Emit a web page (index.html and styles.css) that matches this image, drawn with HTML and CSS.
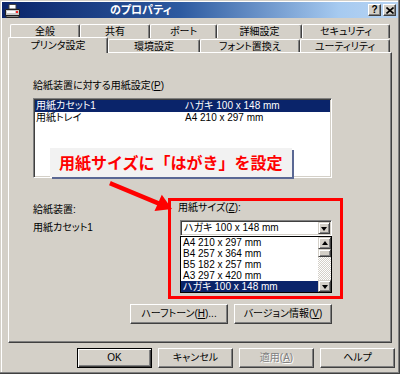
FILE: index.html
```html
<!DOCTYPE html>
<html lang="ja">
<head>
<meta charset="utf-8">
<title>プロパティ</title>
<link rel="stylesheet" href="styles.css">
</head>
<body>
<div class="window">
  <div class="titlebar">
    <svg class="appicon" width="17" height="14" viewBox="0 0 17 14">
      <path d="M5 0.5 L12 0.5 L12 5 L5 5 Z" fill="#fff" stroke="#404040"/>
      <path d="M1.5 5.5 L15.5 5.5 L15.5 11.5 L1.5 11.5 Z" fill="#c8c8c8" stroke="#202020"/>
      <path d="M1.5 11.5 L15.5 11.5 L14.5 13.5 L2.5 13.5 Z" fill="#808080" stroke="#202020"/>
      <rect x="3" y="7" width="8" height="2" fill="#fff"/>
      <rect x="12" y="7" width="2" height="2" fill="#ff2020"/>
    </svg>
    <span class="title">のプロパティ</span>
    <span class="capbtn help">?</span>
    <span class="capbtn close"><svg width="8" height="7" viewBox="0 0 8 7"><path d="M0.5 0.5 L7.5 6.5 M7.5 0.5 L0.5 6.5" stroke="#000" stroke-width="1.6"/></svg></span>
  </div>

  <div class="tabs">
    <div class="tabrow back">
      <div class="tab">全般</div>
      <div class="tab">共有</div>
      <div class="tab">ポート</div>
      <div class="tab">詳細設定</div>
      <div class="tab">セキュリティ</div>
    </div>
    <div class="tabrow front">
      <div class="tab sel">プリンタ設定</div>
      <div class="tab">環境設定</div>
      <div class="tab">フォント置換え</div>
      <div class="tab">ユーティリティ</div>
    </div>
  </div>

  <div class="panel">
    <div class="label first">給紙装置に対する用紙設定(<u>P</u>)</div>
    <div class="listbox">
      <div class="lrow sel"><span class="c1">用紙カセット1</span><span>ハガキ 100 x 148 mm</span></div>
      <div class="lrow"><span class="c1">用紙トレイ</span><span>A4 210 x 297 mm</span></div>
    </div>

    <div class="lower">
      <div class="leftcol">
        <div class="label">給紙装置:</div>
        <div class="label second">用紙カセット1</div>
      </div>
      <div class="redbox">
        <div class="label sizelabel">用紙サイズ(<u>Z</u>):</div>
        <div class="combo">
          <span class="ctext">ハガキ 100 x 148 mm</span>
          <span class="sbtn down"></span>
        </div>
        <div class="droplist">
          <div class="items">
            <div class="item">A4 210 x 297 mm</div>
            <div class="item">B4 257 x 364 mm</div>
            <div class="item">B5 182 x 257 mm</div>
            <div class="item">A3 297 x 420 mm</div>
            <div class="item sel">ハガキ 100 x 148 mm</div>
          </div>
          <div class="vscroll">
            <span class="sbtn up"></span>
            <span class="thumb"></span>
            <span class="track"></span>
            <span class="sbtn down"></span>
          </div>
        </div>
      </div>
    </div>

    <div class="btnrow">
      <div class="btn wide">ハーフトーン(<u>H</u>)...</div>
      <div class="btn wide">バージョン情報(<u>V</u>)</div>
    </div>

    <div class="callout">用紙サイズに「はがき」を設定</div>
    <svg class="arrow" width="76" height="38" viewBox="0 0 76 38">
      <path d="M8 6 L56 26" stroke="#ff0000" stroke-width="4.5" stroke-linecap="square"/>
      <path d="M68 31 L50.5 33 L57.8 16.8 Z" fill="#ff0000"/>
    </svg>
  </div>

  <div class="footer">
    <div class="btn default">OK</div>
    <div class="btn">キャンセル</div>
    <div class="btn disabled">適用(<u>A</u>)</div>
    <div class="btn">ヘルプ</div>
  </div>
</div>
</body>
</html>
```

FILE: styles.css
```css
* { box-sizing: border-box; }
html, body { margin: 0; padding: 0; background: #d4d0c8; }
body {
  font-family: "Liberation Sans", "Noto Sans CJK JP", sans-serif;
  font-size: 10px;
  color: #000;
  font-feature-settings: "palt";
}
u { text-decoration: underline; text-underline-offset: 1px; }

.window {
  width: 400px;
  height: 374px;
  padding: 2px;
  background: #d4d0c8;
  display: flex;
  flex-direction: column;
  box-shadow: inset -1px -1px 0 #404040, inset -2px -2px 0 #808080,
              inset 1px 1px 0 #d4d0c8, inset 2px 2px 0 #ffffff;
}

/* title bar */
.titlebar {
  height: 16px;
  display: flex;
  align-items: center;
  padding: 0 2px 0 2px;
  background: linear-gradient(to right, #0a246a 0%, #2d5aa0 45%, #a6caf0 85%, #b8d4f2 100%);
}
.appicon { flex: none; margin-top: 1px; }
.title {
  margin-left: 89px;
  color: #fff;
  font-weight: bold;
  font-size: 11px;
  line-height: 14px;
  flex: 1;
}
.capbtn {
  width: 13px;
  height: 12px;
  background: #d4d0c8;
  border: 1px solid;
  border-color: #fff #404040 #404040 #fff;
  box-shadow: inset -1px -1px 0 #808080;
  display: flex;
  align-items: center;
  justify-content: center;
  font-weight: bold;
  font-size: 10px;
  line-height: 10px;
}
.capbtn.close { margin-left: 2px; }

/* tabs */
.tabs { margin-top: 4px; }
.tabrow { display: grid; height: 15px; }
.tabrow.back { padding-left: 8px; grid-template-columns: 70px 70px 67px 85px 88px; }
.tabrow.front { padding-left: 6px; grid-template-columns: 100px 92px 100px 90px; }
.tab {
  margin-top: 2px;
  height: 13px;
  background: #d4d0c8;
  border-left: 1px solid #fff;
  border-top: 1px solid #fff;
  border-right: 1px solid #404040;
  box-shadow: inset -1px 0 0 #808080;
  border-radius: 2px 2px 0 0;
  text-align: center;
  line-height: 13px;
  white-space: nowrap;
}
.back .tab { height: 14px; }
.tab.sel {
  margin-top: 0;
  height: 16px;
  position: relative;
  z-index: 2;
  padding-top: 1px;
}

/* panel */
.panel {
  flex: 1;
  margin: 0 6px;
  position: relative;
  border-left: 1px solid #fff;
  border-top: 1px solid #fff;
  border-right: 1px solid #404040;
  border-bottom: 1px solid #404040;
  box-shadow: inset -1px -1px 0 #808080;
  padding: 26px 59px 0 24px;
}
.label { line-height: 13px; white-space: nowrap; }

.listbox {
  margin-top: 6px;
  height: 80px;
  background: #fff;
  border: 1px solid;
  border-color: #808080 #fff #fff #808080;
  box-shadow: inset 1px 1px 0 #404040, inset -1px -1px 0 #d4d0c8;
  padding: 1px;
}
.lrow {
  display: flex;
  height: 12px;
  line-height: 11px;
  padding-left: 1px;
  white-space: nowrap;
}
.lrow.sel { background: #0a246a; color: #fff; }
.c1 { width: 149px; flex: none; }

.lower { display: flex; margin-top: 20px; }
.leftcol { width: 135px; padding-top: 5px; }
.label.second { margin-top: 5px; }

.redbox {
  width: 175px;
  margin-right: -11px;
  height: 101px;
  border: 3px solid #ff0000;
  padding: 0 8px 0 9px;
}
.sizelabel { margin-left: -2px; }
.combo {
  margin-top: 6px;
  height: 16px;
  background: #fff;
  border: 1px solid;
  border-color: #808080 #fff #fff #808080;
  box-shadow: inset 1px 1px 0 #404040, inset -1px -1px 0 #d4d0c8;
  padding: 1px;
  display: flex;
  align-items: stretch;
}
.ctext { flex: 1; line-height: 12px; padding-left: 2px; white-space: nowrap; }

.sbtn {
  width: 12px;
  flex: none;
  background: #d4d0c8;
  border: 1px solid;
  border-color: #d4d0c8 #404040 #404040 #d4d0c8;
  box-shadow: inset 1px 1px 0 #fff, inset -1px -1px 0 #808080;
  display: flex;
  align-items: center;
  justify-content: center;
}
.sbtn::after {
  content: "";
  width: 0;
  height: 0;
  border-left: 3.5px solid transparent;
  border-right: 3.5px solid transparent;
}
.sbtn.down::after { border-top: 4px solid #000; margin-top: 1px; }
.sbtn.up::after { border-bottom: 4px solid #000; margin-bottom: 1px; }

.droplist {
  height: 57px;
  border: 1px solid #000;
  background: #fff;
  display: flex;
}
.items { flex: 1; }
.item {
  height: 11px;
  line-height: 11px;
  padding-left: 2px;
  white-space: nowrap;
}
.item.sel { background: #0a246a; color: #fff; }
.vscroll { width: 13px; display: flex; flex-direction: column; }
.vscroll .sbtn { width: 13px; height: 12px; }
.thumb {
  height: 8px;
  background: #d4d0c8;
  border: 1px solid;
  border-color: #d4d0c8 #404040 #404040 #d4d0c8;
  box-shadow: inset 1px 1px 0 #fff, inset -1px -1px 0 #808080;
}
.track {
  flex: 1;
  background: repeating-conic-gradient(#ffffff 0 25%, #d4d0c8 0 50%) 0 0 / 2px 2px;
}

.btnrow {
  display: flex;
  justify-content: flex-end;
  gap: 6px;
  margin-top: 5px;
}

.btn {
  height: 20px;
  width: 75px;
  background: #d4d0c8;
  border: 1px solid;
  border-color: #fff #404040 #404040 #fff;
  box-shadow: inset -1px -1px 0 #808080;
  display: flex;
  align-items: center;
  justify-content: center;
  white-space: nowrap;
  line-height: 12px;
}
.btn.wide { width: 98px; }
.btn.default {
  border: 1px solid #000;
  box-shadow: inset 1px 1px 0 #fff, inset -1px -1px 0 #404040, inset -2px -2px 0 #808080;
}
.btn.disabled { color: #808080; text-shadow: 1px 1px 0 #fff; }

.footer {
  display: flex;
  justify-content: flex-end;
  gap: 6px;
  padding: 5px 3px 2px 0;
  height: 29px;
}

/* annotations over the dialog */
.callout {
  position: absolute;
  left: 41px;
  top: 95px;
  width: 242px;
  height: 29px;
  background: #f2f2f2;
  box-shadow: 2px 2px 0 #5a6894;
  color: #ff0000;
  font-family: "Noto Sans CJK JP", sans-serif;
  font-weight: bold;
  font-size: 16px;
  line-height: 29px;
  padding-left: 9px;
  font-feature-settings: normal;
  white-space: nowrap;
  z-index: 3;
}
.arrow {
  position: absolute;
  left: 95px;
  top: 125px;
  z-index: 3;
}
```
